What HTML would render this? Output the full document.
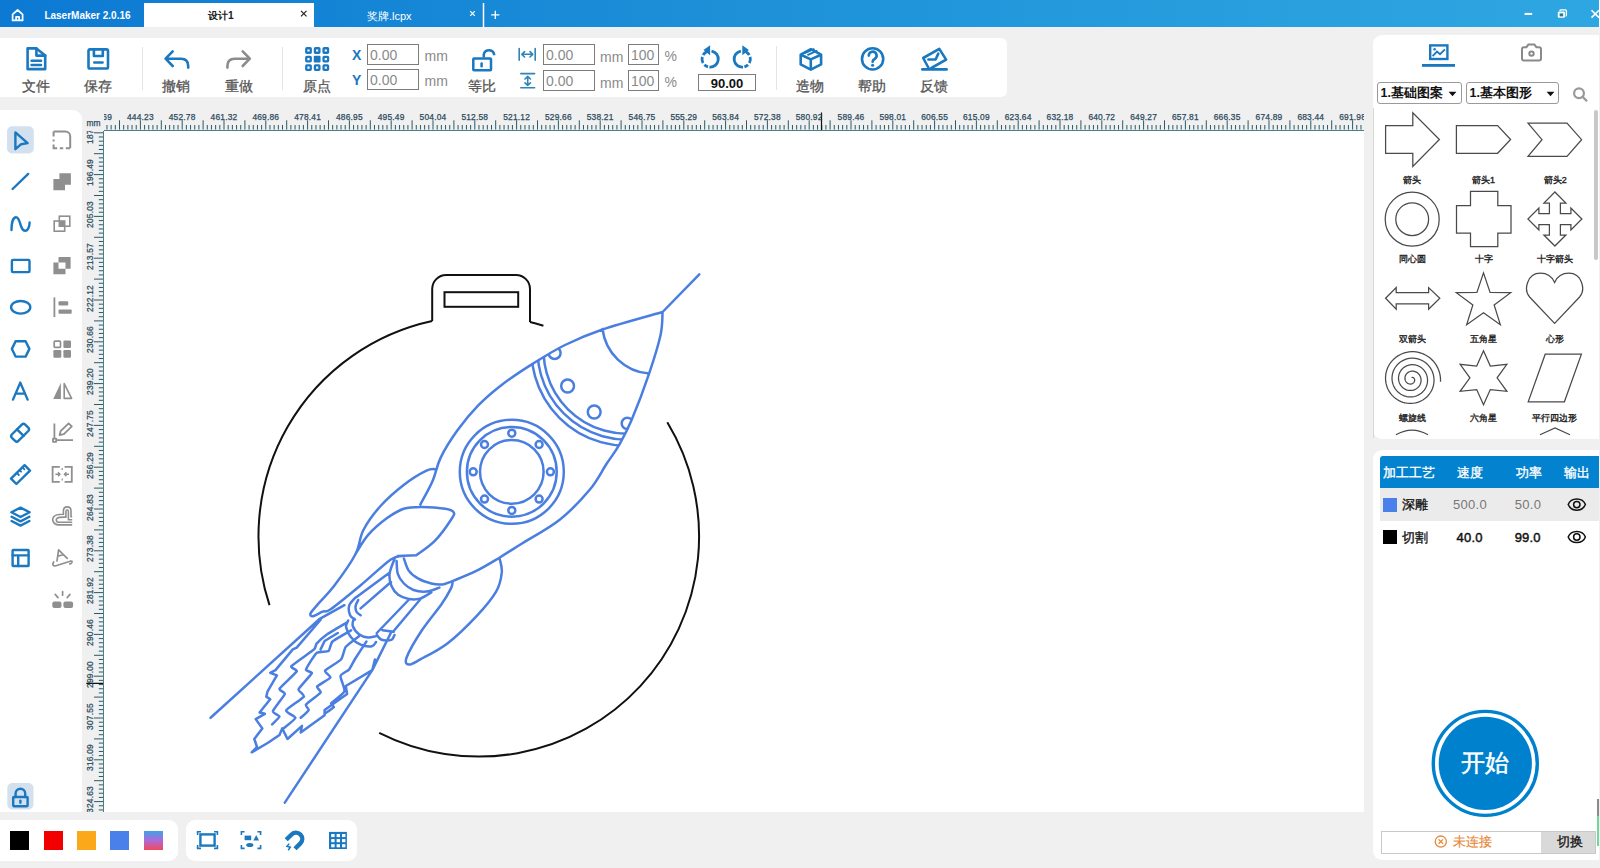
<!DOCTYPE html><html><head><meta charset="utf-8"><style>
*{margin:0;padding:0;box-sizing:border-box}
html,body{width:1600px;height:868px;overflow:hidden;background:#f0f0f0;font-family:"Liberation Sans",sans-serif;position:relative}
.a{position:absolute;white-space:nowrap}
.p{position:absolute;background:#fff}
svg{position:absolute;overflow:visible}
.tl{position:absolute;font-size:14px;color:#555;-webkit-text-stroke:0.3px #555;line-height:14px;white-space:nowrap;text-align:center}
.inp{position:absolute;border:1px solid #7c7c7c;background:#fff;font-size:14px;color:#8a8a8a;line-height:21px;padding-left:2px;white-space:nowrap}
.rl{position:absolute;width:40px;text-align:center;font-size:8.4px;line-height:9px;color:#2c4b5e;letter-spacing:0.2px;-webkit-text-stroke:0.25px #2c4b5e;white-space:nowrap}
.mm{position:absolute;font-size:14px;color:#8a8a8a;line-height:14px}
</style></head><body><div class="a" style="left:0;top:0;width:1599px;height:27px;background:linear-gradient(to right,#0c79d3 0%,#1d90d8 45%,#2ca3e0 89%,#2ea6e1 100%)"></div>
<div class="a" style="left:1599px;top:0;width:1px;height:27px;background:#f4fbff"></div>
<div class="a" style="left:144px;top:3px;width:170px;height:24px;background:#fff"></div>
<div class="p" style="left:0;top:38px;width:1007px;height:59px;border-radius:0 6px 6px 0"></div>
<div class="p" style="left:0;top:110px;width:82px;height:702px;border-radius:0 9px 0 0"></div>
<div class="p" style="left:104px;top:131px;width:1260px;height:681px"></div>
<div class="p" style="left:1373px;top:35px;width:226px;height:404px;border-radius:9px 0 0 9px"></div>
<div class="p" style="left:1373px;top:450px;width:226px;height:410px;border-radius:9px 0 0 9px"></div>
<div class="p" style="left:0;top:820px;width:178px;height:41px;border-radius:0 9px 9px 0"></div>
<div class="p" style="left:186px;top:820px;width:171px;height:41px;border-radius:9px"></div>
<svg class="a" style="left:0;top:0" width="1600" height="30" viewBox="0 0 1600 30">
  <g fill="none" stroke="#fff" stroke-width="1.7" stroke-linejoin="round">
    <path d="M12.6,14.4 L17.6,10 L22.6,14.4 V20.4 H12.6 Z"/>
    <path d="M16.1,20.4 V16.8 H19.1 V20.4"/>
  </g>
  <g fill="none" stroke-linecap="butt">
    <path d="M301,10.8 L306.5,16.3 M306.5,10.8 L301,16.3" stroke="#222" stroke-width="1.2"/>
    <path d="M470.2,11.2 L474.8,15.8 M474.8,11.2 L470.2,15.8" stroke="#fff" stroke-width="1.2"/>
    <path d="M483.5,3 V27" stroke="#fff" stroke-width="1.5"/>
    <path d="M491.2,14.8 H499.4 M495.3,10.7 V18.9" stroke="#fff" stroke-width="1.3"/>
    <path d="M1524.6,13.9 H1532.2" stroke="#fff" stroke-width="2"/>
    <path d="M1591.5,10.2 L1599,17.6 M1599,10.2 L1591.5,17.6" stroke="#fff" stroke-width="1.6"/>
  </g>
  <rect x="1557.8" y="11.4" width="7.2" height="6.4" rx="1.4" fill="#fff"/>
  <path d="M1560,11 V10.6 Q1560,9.8 1561,9.8 H1565.4 Q1566.4,9.8 1566.4,10.8 V15 Q1566.4,16 1565.6,16" fill="none" stroke="#fff" stroke-width="1.3"/>
  <rect x="1559.6" y="13.4" width="3.6" height="3" fill="#227f8f"/>
</svg>
<div class="a" style="left:44.4px;top:10.2px;font-size:10px;line-height:12px;font-weight:bold;color:#fff">LaserMaker 2.0.16</div>
<div class="a" style="left:208px;top:10px;font-size:10.2px;line-height:12px;font-weight:bold;color:#222">设计1</div>
<div class="a" style="left:367px;top:10px;font-size:11px;line-height:12px;color:#fff">奖牌.lcpx</div>
<svg class="a" style="left:0;top:0" width="1600" height="100" viewBox="0 0 1600 100"><g fill="none" stroke="#1a78c0" stroke-width="2.6" stroke-linejoin="round" stroke-linecap="round"><path d="M27.6,48.4 H36.4 L45.2,55.6 V69.1 H27.6 Z"/><path d="M36.4,48.4 V55.6 H45.2"/><path d="M31.6,60.8 H41 M31.6,65 H41"/><rect x="88.5" y="49.4" width="19.5" height="19.1" rx="1.6"/><path d="M93.9,49.6 V56 H102.8 V49.6"/><path d="M94.3,62.5 H102.5"/><path d="M172.7,51.4 L165.6,58.7 L172.7,66 M165.6,58.7 H181 Q188.2,58.7 188.2,66 V67.6"/></g><g fill="none" stroke="#8c8c8c" stroke-width="2.6" stroke-linejoin="round" stroke-linecap="round"><path d="M242.7,51.4 L249.8,58.7 L242.7,66 M249.8,58.7 H234.6 Q227.4,58.7 227.4,66 V67.6"/></g><rect x="306.25" y="48.25" width="4.5" height="4.5" rx="0.6" fill="none" stroke="#1a78c0" stroke-width="2.3"/><rect x="314.90" y="48.25" width="4.5" height="4.5" rx="0.6" fill="none" stroke="#1a78c0" stroke-width="2.3"/><rect x="323.55" y="48.25" width="4.5" height="4.5" rx="0.6" fill="none" stroke="#1a78c0" stroke-width="2.3"/><rect x="306.25" y="56.80" width="4.5" height="4.5" rx="0.6" fill="none" stroke="#1a78c0" stroke-width="2.3"/><rect x="313.75" y="55.65" width="6.8" height="6.8" rx="1" fill="#1a78c0"/><rect x="323.55" y="56.80" width="4.5" height="4.5" rx="0.6" fill="none" stroke="#1a78c0" stroke-width="2.3"/><rect x="306.25" y="65.35" width="4.5" height="4.5" rx="0.6" fill="none" stroke="#1a78c0" stroke-width="2.3"/><rect x="314.90" y="65.35" width="4.5" height="4.5" rx="0.6" fill="none" stroke="#1a78c0" stroke-width="2.3"/><rect x="323.55" y="65.35" width="4.5" height="4.5" rx="0.6" fill="none" stroke="#1a78c0" stroke-width="2.3"/><g fill="none" stroke="#1a78c0" stroke-width="2.5" stroke-linecap="round"><rect x="473.3" y="58.5" width="17.7" height="11.8" rx="0.8"/><path d="M483.8,57.6 V54.2 A5.3,5.3 0 0 1 494.1,54.2 V55.2" stroke-linecap="butt"/><path d="M481.6,63.4 V66.3"/></g><g fill="none" stroke="#2f84b8" stroke-width="1.6" stroke-linecap="round" stroke-linejoin="round"><path d="M519.2,48.6 V60.2 M535.2,48.6 V60.2 M521.8,54.3 H532.8 M524.6,51.6 L521.8,54.3 L524.6,57 M530,51.6 L532.8,54.3 L530,57"/><path d="M520.8,73.6 H534.6 M520.8,87.7 H534.6 M527.7,76.4 V85.4 M525,79 L527.7,76.4 L530.4,79 M525,82.8 L527.7,85.4 L530.4,82.8"/></g><path d="M711.51,51.02 A8.1,8.1 0 0 1 709.39,67.07" fill="none" stroke="#1a78c0" stroke-width="2.8"/><path d="M708.00,66.82 A8.1,8.1 0 0 1 704.37,64.73" fill="none" stroke="#1a78c0" stroke-width="2.8"/><path d="M703.09,63.05 A8.1,8.1 0 0 1 702.28,56.90" fill="none" stroke="#1a78c0" stroke-width="2.8"/><path d="M703.09,54.95 A8.1,8.1 0 0 1 706.68,51.66" fill="none" stroke="#1a78c0" stroke-width="2.8"/><path d="M703.50,50.10 L710.10,45.20 L710.10,55.30 Z" fill="#1a78c0"/><path d="M740.89,51.02 A8.1,8.1 0 0 0 743.01,67.07" fill="none" stroke="#1a78c0" stroke-width="2.8"/><path d="M744.40,66.82 A8.1,8.1 0 0 0 748.03,64.73" fill="none" stroke="#1a78c0" stroke-width="2.8"/><path d="M749.31,63.05 A8.1,8.1 0 0 0 750.12,56.90" fill="none" stroke="#1a78c0" stroke-width="2.8"/><path d="M749.31,54.95 A8.1,8.1 0 0 0 745.72,51.66" fill="none" stroke="#1a78c0" stroke-width="2.8"/><path d="M748.90,50.10 L742.30,45.20 L742.30,55.30 Z" fill="#1a78c0"/><g fill="none" stroke="#1a78c0" stroke-width="2.6" stroke-linejoin="round"><path d="M810.8,49.2 L821.1,54.6 V64.4 L810.8,69.6 L800.7,64.4 V54.6 Z"/><path d="M800.9,54.8 L810.8,59.4 L821,54.8 M810.8,59.4 V69.4"/><path d="M804.6,53.2 L814.5,48.8 M807.4,55.1 L817.4,50.6" stroke-width="2"/></g><g fill="none" stroke="#1a78c0" stroke-width="2.6" stroke-linecap="round"><circle cx="872.6" cy="58.9" r="10.6"/><path d="M868.8,55.6 A3.9,3.9 0 1 1 874.6,59 Q872.6,60 872.6,61.8"/></g><circle cx="872.6" cy="65.3" r="1.5" fill="#1a78c0"/><g fill="none" stroke="#1a78c0" stroke-width="2.6" stroke-linejoin="round" stroke-linecap="round"><path d="M928.6,68 L923.2,58 L939.3,48.9 L946.1,59.6 L931.4,68"/><path d="M928.4,59.5 H935.6 L938.3,53.6"/><path d="M922.3,69.4 H946.6"/></g></svg>
<div class="a" style="left:141.5px;top:47px;width:1px;height:43px;background:#e4e4e4"></div>
<div class="a" style="left:282px;top:47px;width:1px;height:43px;background:#e4e4e4"></div>
<div class="a" style="left:775.5px;top:46px;width:1px;height:44px;background:#e4e4e4"></div>
<div class="tl" style="left:16px;top:79px;width:40px">文件</div>
<div class="tl" style="left:78px;top:79px;width:40px">保存</div>
<div class="tl" style="left:156px;top:79px;width:40px">撤销</div>
<div class="tl" style="left:218.5px;top:79px;width:40px">重做</div>
<div class="tl" style="left:297px;top:79px;width:40px">原点</div>
<div class="tl" style="left:461.5px;top:79px;width:40px">等比</div>
<div class="tl" style="left:790px;top:79px;width:40px">造物</div>
<div class="tl" style="left:852px;top:79px;width:40px">帮助</div>
<div class="tl" style="left:914px;top:79px;width:40px">反馈</div>
<div class="a" style="left:352px;top:48px;font-size:14px;font-weight:bold;color:#1a78c0;line-height:14px">X</div>
<div class="a" style="left:352px;top:73px;font-size:14px;font-weight:bold;color:#1a78c0;line-height:14px">Y</div>
<div class="inp" style="left:367px;top:44px;width:52px;height:21px">0.00</div>
<div class="inp" style="left:367px;top:69px;width:52px;height:21px">0.00</div>
<div class="inp" style="left:543px;top:44px;width:52px;height:21px">0.00</div>
<div class="inp" style="left:543px;top:70px;width:52px;height:21px">0.00</div>
<div class="inp" style="left:628px;top:44px;width:31px;height:21px">100</div>
<div class="inp" style="left:628px;top:70px;width:31px;height:21px">100</div>
<div class="mm" style="left:424.5px;top:49px">mm</div>
<div class="mm" style="left:424.5px;top:74px">mm</div>
<div class="mm" style="left:600px;top:49.5px">mm</div>
<div class="mm" style="left:600px;top:75.5px">mm</div>
<div class="mm" style="left:664.5px;top:49px">%</div>
<div class="mm" style="left:664.5px;top:75px">%</div>
<div class="inp" style="left:698px;top:73.5px;width:58px;height:17.5px;color:#111;text-align:center;line-height:17px;padding:0;font-size:13px;font-weight:bold">90.00</div>
<svg class="a" style="left:0;top:0" width="100" height="868" viewBox="0 0 100 868"><rect x="7" y="126.3" width="26.8" height="27.2" rx="5" fill="#d3e1ef"/><rect x="7.3" y="783" width="26.2" height="26.4" rx="5" fill="#d3e1ef"/><g fill="none" stroke="#1a78c0" stroke-width="2.4" stroke-linejoin="round" stroke-linecap="round"><path d="M15.4,132.4 L27.6,143.1 L21.2,144.2 L15.4,149.2 Z"/><path d="M12.6,189 L28.2,173.9"/><path d="M11.5,230 C11.5,222 13.5,217.2 16,217.2 C19,217.2 20,223.5 21,226 C22,229 23.2,230.8 25.3,230.8 C28,230.8 29.6,226 29.6,222.5"/><rect x="11.9" y="259.9" width="17.6" height="12.2" rx="1"/><ellipse cx="20.7" cy="307.3" rx="9.6" ry="6.3"/><path d="M15.6,341.3 H25.6 L29.4,348.9 L25.6,356.6 H15.6 L11.9,348.9 Z"/><path d="M13,399.6 L20.3,382.6 L27.6,399.6 M15.6,393.6 H25"/><path d="M11.8,434.5 L21.8,424.6 Q23.5,423 25.2,424.6 L28.3,427.7 Q29.9,429.3 28.3,431 L18.4,440.9 Q16.8,442.5 15.1,440.9 L11.9,437.8 Q10.3,436.1 11.8,434.5 Z"/><path d="M17,429.3 L23.6,435.8"/><path d="M11,478.6 L24.6,465.2 L30,470.6 L16.4,484 Z"/><path d="M16.8,473 L18.8,475 M19.6,470.2 L21.1,471.7 M22.4,467.4 L24.4,469.4" stroke-width="1.8"/><path d="M20.5,507.6 L29.6,512.3 L20.5,517 L11.4,512.3 Z"/><path d="M11.6,516.8 L20.5,521.4 L29.4,516.8 M11.6,521 L20.5,525.6 L29.4,521" /><rect x="12.6" y="550" width="16" height="16" rx="0.5"/><path d="M12.6,555.4 H28.6 M18.2,555.4 V566"/><rect x="13.2" y="797" width="14.4" height="9.2" rx="0.6"/><path d="M15.6,797 V793.6 A4.8,4.8 0 0 1 25.2,793.6 V797"/><path d="M20.4,800.6 V802.8"/></g><g fill="none" stroke="#8f8f8f" stroke-width="2"><path d="M53.6,131.6 H65.4 A4.8,4.8 0 0 1 70.2,136.4 V148"/><path d="M53.6,131.6 V136.6 M53.6,139.6 V141.6 M53.6,144.4 V148.2 H57.2 M59.8,148.2 H63.2 M65.8,148.2 H70.2"/></g><g fill="#8f8f8f"><path d="M53.4,179.1 H59.4 V173.2 H70.9 V184.7 H65 V190.2 H53.4 Z"/></g><g fill="none" stroke="#8f8f8f" stroke-width="1.6"><rect x="54.2" y="221" width="10.5" height="10.2"/><rect x="59.3" y="216.2" width="10.5" height="10"/></g><rect x="59.3" y="221" width="5.4" height="5.2" fill="#8f8f8f"/><path d="M53.4,262.5 H58.5 V257 H70.6 V268.7 H65.5 V274.3 H53.4 Z M58.5,262.5 V268.7 H65.5 V262.5 Z" fill="#8f8f8f" fill-rule="evenodd"/><path d="M54.4,297.4 V317" stroke="#8f8f8f" stroke-width="1.8" fill="none"/><rect x="58.5" y="301.3" width="9.7" height="4.1" rx="1" fill="#8f8f8f"/><rect x="58.5" y="309.6" width="13.2" height="4.1" rx="1" fill="#8f8f8f"/><rect x="54.2" y="341.2" width="6.3" height="6.1" rx="0.8" fill="none" stroke="#8f8f8f" stroke-width="1.7"/><rect x="63.4" y="340.4" width="7.6" height="7.6" rx="1.2" fill="#8f8f8f"/><rect x="53.4" y="350.1" width="7.9" height="7.6" rx="1.2" fill="#8f8f8f"/><rect x="63.4" y="350.1" width="7.6" height="7.6" rx="1.2" fill="#8f8f8f"/><path d="M53.2,399 L60.9,382.8 V399 Z" fill="#8f8f8f"/><path d="M64.2,383.6 L71.6,398.4 H64.2 Z" fill="none" stroke="#8f8f8f" stroke-width="1.6" stroke-linejoin="round"/><g fill="none" stroke="#8f8f8f" stroke-width="1.8" stroke-linejoin="round"><path d="M54.4,423.6 V438.4 M56.4,440.2 H73"/><rect x="53" y="438.6" width="3.2" height="3.2"/><path d="M59.6,435 L60.6,431.2 L68.6,423.4 L71.8,426.4 L63.8,434.2 Z"/></g><g fill="none" stroke="#8f8f8f" stroke-width="1.8"><path d="M59.8,466.8 H52.6 V481.8 H59.8 M64.6,466.8 H71.8 V481.8 H64.6"/><path d="M55.4,474.3 H60 M58,472.3 L60,474.3 L58,476.3 M69,474.3 H64.4 M66.4,472.3 L64.4,474.3 L66.4,476.3" stroke-width="1.4"/><path d="M62.2,468 V470 M62.2,478.4 V480.6" stroke-width="1.2"/></g><g fill="none" stroke="#8f8f8f" stroke-width="1.6"><path d="M72.2,524.9 H58.2 C53.6,524.9 51.4,519.8 53.6,516.9 C55.2,514.8 58.4,514.2 63.4,514.3 V511 C63.4,508.6 65,506.9 67.2,506.9 C69.4,506.9 71,508.6 71,511 V516.8 H72.2"/><path d="M72.2,522.3 H58.8 C56.4,522.3 55.4,519.7 57,518.3 C58.2,517.3 60.6,517 65.9,517.1 V511.4 C65.9,510.4 66.5,509.7 67.2,509.7 C67.9,509.7 68.4,510.4 68.4,511.4 V519.7 H72.2"/></g><g fill="none" stroke="#8f8f8f" stroke-width="1.7" stroke-linecap="round" stroke-linejoin="round"><path d="M57,561 L58.6,549.9 L67.2,558.4 M57.6,556.2 L63.6,554.6"/><path d="M53.6,562 Q51.6,566 55.2,566 L70.2,561.2 Q72.8,560.6 71.8,562.6 Q71,564 69.8,563.8"/></g><g fill="none" stroke="#8f8f8f" stroke-width="1.7" stroke-linecap="round"><path d="M62.6,591.6 V595.2 M55.2,594.4 L58,597.6 M70,594.4 L67.2,597.6"/></g><rect x="52.3" y="601.6" width="9.2" height="6.4" rx="2" fill="#8f8f8f"/><rect x="63.4" y="601.6" width="9.7" height="6.4" rx="2" fill="#8f8f8f"/></svg>
<div class="a" style="left:104px;top:129.5px;width:1260px;height:1.2px;background:#4b7f88"></div>
<svg class="a" style="left:0;top:0" width="1600" height="868" viewBox="0 0 1600 868"><path d="M106.96,125 V129.6 M111.14,125 V129.6 M115.32,125 V129.6 M119.50,120.3 V129.6 M123.68,125 V129.6 M127.86,125 V129.6 M132.04,125 V129.6 M136.22,125 V129.6 M140.40,120.3 V129.6 M144.58,125 V129.6 M148.76,125 V129.6 M152.94,125 V129.6 M157.12,125 V129.6 M161.30,120.3 V129.6 M165.48,125 V129.6 M169.66,125 V129.6 M173.84,125 V129.6 M178.02,125 V129.6 M182.20,120.3 V129.6 M186.38,125 V129.6 M190.56,125 V129.6 M194.74,125 V129.6 M198.92,125 V129.6 M203.10,120.3 V129.6 M207.28,125 V129.6 M211.46,125 V129.6 M215.64,125 V129.6 M219.82,125 V129.6 M224.00,120.3 V129.6 M228.18,125 V129.6 M232.36,125 V129.6 M236.54,125 V129.6 M240.72,125 V129.6 M244.90,120.3 V129.6 M249.08,125 V129.6 M253.26,125 V129.6 M257.44,125 V129.6 M261.62,125 V129.6 M265.80,120.3 V129.6 M269.98,125 V129.6 M274.16,125 V129.6 M278.34,125 V129.6 M282.52,125 V129.6 M286.70,120.3 V129.6 M290.88,125 V129.6 M295.06,125 V129.6 M299.24,125 V129.6 M303.42,125 V129.6 M307.60,120.3 V129.6 M311.78,125 V129.6 M315.96,125 V129.6 M320.14,125 V129.6 M324.32,125 V129.6 M328.50,120.3 V129.6 M332.68,125 V129.6 M336.86,125 V129.6 M341.04,125 V129.6 M345.22,125 V129.6 M349.40,120.3 V129.6 M353.58,125 V129.6 M357.76,125 V129.6 M361.94,125 V129.6 M366.12,125 V129.6 M370.30,120.3 V129.6 M374.48,125 V129.6 M378.66,125 V129.6 M382.84,125 V129.6 M387.02,125 V129.6 M391.20,120.3 V129.6 M395.38,125 V129.6 M399.56,125 V129.6 M403.74,125 V129.6 M407.92,125 V129.6 M412.10,120.3 V129.6 M416.28,125 V129.6 M420.46,125 V129.6 M424.64,125 V129.6 M428.82,125 V129.6 M433.00,120.3 V129.6 M437.18,125 V129.6 M441.36,125 V129.6 M445.54,125 V129.6 M449.72,125 V129.6 M453.90,120.3 V129.6 M458.08,125 V129.6 M462.26,125 V129.6 M466.44,125 V129.6 M470.62,125 V129.6 M474.80,120.3 V129.6 M478.98,125 V129.6 M483.16,125 V129.6 M487.34,125 V129.6 M491.52,125 V129.6 M495.70,120.3 V129.6 M499.88,125 V129.6 M504.06,125 V129.6 M508.24,125 V129.6 M512.42,125 V129.6 M516.60,120.3 V129.6 M520.78,125 V129.6 M524.96,125 V129.6 M529.14,125 V129.6 M533.32,125 V129.6 M537.50,120.3 V129.6 M541.68,125 V129.6 M545.86,125 V129.6 M550.04,125 V129.6 M554.22,125 V129.6 M558.40,120.3 V129.6 M562.58,125 V129.6 M566.76,125 V129.6 M570.94,125 V129.6 M575.12,125 V129.6 M579.30,120.3 V129.6 M583.48,125 V129.6 M587.66,125 V129.6 M591.84,125 V129.6 M596.02,125 V129.6 M600.20,120.3 V129.6 M604.38,125 V129.6 M608.56,125 V129.6 M612.74,125 V129.6 M616.92,125 V129.6 M621.10,120.3 V129.6 M625.28,125 V129.6 M629.46,125 V129.6 M633.64,125 V129.6 M637.82,125 V129.6 M642.00,120.3 V129.6 M646.18,125 V129.6 M650.36,125 V129.6 M654.54,125 V129.6 M658.72,125 V129.6 M662.90,120.3 V129.6 M667.08,125 V129.6 M671.26,125 V129.6 M675.44,125 V129.6 M679.62,125 V129.6 M683.80,120.3 V129.6 M687.98,125 V129.6 M692.16,125 V129.6 M696.34,125 V129.6 M700.52,125 V129.6 M704.70,120.3 V129.6 M708.88,125 V129.6 M713.06,125 V129.6 M717.24,125 V129.6 M721.42,125 V129.6 M725.60,120.3 V129.6 M729.78,125 V129.6 M733.96,125 V129.6 M738.14,125 V129.6 M742.32,125 V129.6 M746.50,120.3 V129.6 M750.68,125 V129.6 M754.86,125 V129.6 M759.04,125 V129.6 M763.22,125 V129.6 M767.40,120.3 V129.6 M771.58,125 V129.6 M775.76,125 V129.6 M779.94,125 V129.6 M784.12,125 V129.6 M788.30,120.3 V129.6 M792.48,125 V129.6 M796.66,125 V129.6 M800.84,125 V129.6 M805.02,125 V129.6 M809.20,120.3 V129.6 M813.38,125 V129.6 M817.56,125 V129.6 M821.74,125 V129.6 M825.92,125 V129.6 M830.10,120.3 V129.6 M834.28,125 V129.6 M838.46,125 V129.6 M842.64,125 V129.6 M846.82,125 V129.6 M851.00,120.3 V129.6 M855.18,125 V129.6 M859.36,125 V129.6 M863.54,125 V129.6 M867.72,125 V129.6 M871.90,120.3 V129.6 M876.08,125 V129.6 M880.26,125 V129.6 M884.44,125 V129.6 M888.62,125 V129.6 M892.80,120.3 V129.6 M896.98,125 V129.6 M901.16,125 V129.6 M905.34,125 V129.6 M909.52,125 V129.6 M913.70,120.3 V129.6 M917.88,125 V129.6 M922.06,125 V129.6 M926.24,125 V129.6 M930.42,125 V129.6 M934.60,120.3 V129.6 M938.78,125 V129.6 M942.96,125 V129.6 M947.14,125 V129.6 M951.32,125 V129.6 M955.50,120.3 V129.6 M959.68,125 V129.6 M963.86,125 V129.6 M968.04,125 V129.6 M972.22,125 V129.6 M976.40,120.3 V129.6 M980.58,125 V129.6 M984.76,125 V129.6 M988.94,125 V129.6 M993.12,125 V129.6 M997.30,120.3 V129.6 M1001.48,125 V129.6 M1005.66,125 V129.6 M1009.84,125 V129.6 M1014.02,125 V129.6 M1018.20,120.3 V129.6 M1022.38,125 V129.6 M1026.56,125 V129.6 M1030.74,125 V129.6 M1034.92,125 V129.6 M1039.10,120.3 V129.6 M1043.28,125 V129.6 M1047.46,125 V129.6 M1051.64,125 V129.6 M1055.82,125 V129.6 M1060.00,120.3 V129.6 M1064.18,125 V129.6 M1068.36,125 V129.6 M1072.54,125 V129.6 M1076.72,125 V129.6 M1080.90,120.3 V129.6 M1085.08,125 V129.6 M1089.26,125 V129.6 M1093.44,125 V129.6 M1097.62,125 V129.6 M1101.80,120.3 V129.6 M1105.98,125 V129.6 M1110.16,125 V129.6 M1114.34,125 V129.6 M1118.52,125 V129.6 M1122.70,120.3 V129.6 M1126.88,125 V129.6 M1131.06,125 V129.6 M1135.24,125 V129.6 M1139.42,125 V129.6 M1143.60,120.3 V129.6 M1147.78,125 V129.6 M1151.96,125 V129.6 M1156.14,125 V129.6 M1160.32,125 V129.6 M1164.50,120.3 V129.6 M1168.68,125 V129.6 M1172.86,125 V129.6 M1177.04,125 V129.6 M1181.22,125 V129.6 M1185.40,120.3 V129.6 M1189.58,125 V129.6 M1193.76,125 V129.6 M1197.94,125 V129.6 M1202.12,125 V129.6 M1206.30,120.3 V129.6 M1210.48,125 V129.6 M1214.66,125 V129.6 M1218.84,125 V129.6 M1223.02,125 V129.6 M1227.20,120.3 V129.6 M1231.38,125 V129.6 M1235.56,125 V129.6 M1239.74,125 V129.6 M1243.92,125 V129.6 M1248.10,120.3 V129.6 M1252.28,125 V129.6 M1256.46,125 V129.6 M1260.64,125 V129.6 M1264.82,125 V129.6 M1269.00,120.3 V129.6 M1273.18,125 V129.6 M1277.36,125 V129.6 M1281.54,125 V129.6 M1285.72,125 V129.6 M1289.90,120.3 V129.6 M1294.08,125 V129.6 M1298.26,125 V129.6 M1302.44,125 V129.6 M1306.62,125 V129.6 M1310.80,120.3 V129.6 M1314.98,125 V129.6 M1319.16,125 V129.6 M1323.34,125 V129.6 M1327.52,125 V129.6 M1331.70,120.3 V129.6 M1335.88,125 V129.6 M1340.06,125 V129.6 M1344.24,125 V129.6 M1348.42,125 V129.6 M1352.60,120.3 V129.6 M1356.78,125 V129.6 M1360.96,125 V129.6 M94,132.80 H103 M98.8,136.98 H103 M98.8,141.16 H103 M98.8,145.34 H103 M98.8,149.52 H103 M94,153.70 H103 M98.8,157.88 H103 M98.8,162.06 H103 M98.8,166.24 H103 M98.8,170.42 H103 M94,174.60 H103 M98.8,178.78 H103 M98.8,182.96 H103 M98.8,187.14 H103 M98.8,191.32 H103 M94,195.50 H103 M98.8,199.68 H103 M98.8,203.86 H103 M98.8,208.04 H103 M98.8,212.22 H103 M94,216.40 H103 M98.8,220.58 H103 M98.8,224.76 H103 M98.8,228.94 H103 M98.8,233.12 H103 M94,237.30 H103 M98.8,241.48 H103 M98.8,245.66 H103 M98.8,249.84 H103 M98.8,254.02 H103 M94,258.20 H103 M98.8,262.38 H103 M98.8,266.56 H103 M98.8,270.74 H103 M98.8,274.92 H103 M94,279.10 H103 M98.8,283.28 H103 M98.8,287.46 H103 M98.8,291.64 H103 M98.8,295.82 H103 M94,300.00 H103 M98.8,304.18 H103 M98.8,308.36 H103 M98.8,312.54 H103 M98.8,316.72 H103 M94,320.90 H103 M98.8,325.08 H103 M98.8,329.26 H103 M98.8,333.44 H103 M98.8,337.62 H103 M94,341.80 H103 M98.8,345.98 H103 M98.8,350.16 H103 M98.8,354.34 H103 M98.8,358.52 H103 M94,362.70 H103 M98.8,366.88 H103 M98.8,371.06 H103 M98.8,375.24 H103 M98.8,379.42 H103 M94,383.60 H103 M98.8,387.78 H103 M98.8,391.96 H103 M98.8,396.14 H103 M98.8,400.32 H103 M94,404.50 H103 M98.8,408.68 H103 M98.8,412.86 H103 M98.8,417.04 H103 M98.8,421.22 H103 M94,425.40 H103 M98.8,429.58 H103 M98.8,433.76 H103 M98.8,437.94 H103 M98.8,442.12 H103 M94,446.30 H103 M98.8,450.48 H103 M98.8,454.66 H103 M98.8,458.84 H103 M98.8,463.02 H103 M94,467.20 H103 M98.8,471.38 H103 M98.8,475.56 H103 M98.8,479.74 H103 M98.8,483.92 H103 M94,488.10 H103 M98.8,492.28 H103 M98.8,496.46 H103 M98.8,500.64 H103 M98.8,504.82 H103 M94,509.00 H103 M98.8,513.18 H103 M98.8,517.36 H103 M98.8,521.54 H103 M98.8,525.72 H103 M94,529.90 H103 M98.8,534.08 H103 M98.8,538.26 H103 M98.8,542.44 H103 M98.8,546.62 H103 M94,550.80 H103 M98.8,554.98 H103 M98.8,559.16 H103 M98.8,563.34 H103 M98.8,567.52 H103 M94,571.70 H103 M98.8,575.88 H103 M98.8,580.06 H103 M98.8,584.24 H103 M98.8,588.42 H103 M94,592.60 H103 M98.8,596.78 H103 M98.8,600.96 H103 M98.8,605.14 H103 M98.8,609.32 H103 M94,613.50 H103 M98.8,617.68 H103 M98.8,621.86 H103 M98.8,626.04 H103 M98.8,630.22 H103 M94,634.40 H103 M98.8,638.58 H103 M98.8,642.76 H103 M98.8,646.94 H103 M98.8,651.12 H103 M94,655.30 H103 M98.8,659.48 H103 M98.8,663.66 H103 M98.8,667.84 H103 M98.8,672.02 H103 M94,676.20 H103 M98.8,680.38 H103 M98.8,684.56 H103 M98.8,688.74 H103 M98.8,692.92 H103 M94,697.10 H103 M98.8,701.28 H103 M98.8,705.46 H103 M98.8,709.64 H103 M98.8,713.82 H103 M94,718.00 H103 M98.8,722.18 H103 M98.8,726.36 H103 M98.8,730.54 H103 M98.8,734.72 H103 M94,738.90 H103 M98.8,743.08 H103 M98.8,747.26 H103 M98.8,751.44 H103 M98.8,755.62 H103 M94,759.80 H103 M98.8,763.98 H103 M98.8,768.16 H103 M98.8,772.34 H103 M98.8,776.52 H103 M94,780.70 H103 M98.8,784.88 H103 M98.8,789.06 H103 M98.8,793.24 H103 M98.8,797.42 H103 M94,801.60 H103 M98.8,805.78 H103 M98.8,809.96 H103" stroke="#2b5a66" stroke-width="1" fill="none"/><path d="M821.5,112.5 V130 M86.3,683.3 H103" stroke="#111" stroke-width="1.2"/></svg>
<div class="a" style="left:83.5px;top:131px;width:19.5px;height:681px;background:#ececec;z-index:-1"></div>
<div class="a" style="left:102.6px;top:131px;width:1.3px;height:681px;background:#4b7f88"></div>
<div class="a" style="left:104px;top:105px;width:1260px;height:20px;overflow:hidden"><div class="a" style="left:-104px;top:-105px;width:1400px;height:130px"><div class="rl" style="left:78.60px;top:112.5px">435.69</div><div class="rl" style="left:120.40px;top:112.5px">444.23</div><div class="rl" style="left:162.20px;top:112.5px">452.78</div><div class="rl" style="left:204.00px;top:112.5px">461.32</div><div class="rl" style="left:245.80px;top:112.5px">469.86</div><div class="rl" style="left:287.60px;top:112.5px">478.41</div><div class="rl" style="left:329.40px;top:112.5px">486.95</div><div class="rl" style="left:371.20px;top:112.5px">495.49</div><div class="rl" style="left:413.00px;top:112.5px">504.04</div><div class="rl" style="left:454.80px;top:112.5px">512.58</div><div class="rl" style="left:496.60px;top:112.5px">521.12</div><div class="rl" style="left:538.40px;top:112.5px">529.66</div><div class="rl" style="left:580.20px;top:112.5px">538.21</div><div class="rl" style="left:622.00px;top:112.5px">546.75</div><div class="rl" style="left:663.80px;top:112.5px">555.29</div><div class="rl" style="left:705.60px;top:112.5px">563.84</div><div class="rl" style="left:747.40px;top:112.5px">572.38</div><div class="rl" style="left:789.20px;top:112.5px">580.92</div><div class="rl" style="left:831.00px;top:112.5px">589.46</div><div class="rl" style="left:872.80px;top:112.5px">598.01</div><div class="rl" style="left:914.60px;top:112.5px">606.55</div><div class="rl" style="left:956.40px;top:112.5px">615.09</div><div class="rl" style="left:998.20px;top:112.5px">623.64</div><div class="rl" style="left:1040.00px;top:112.5px">632.18</div><div class="rl" style="left:1081.80px;top:112.5px">640.72</div><div class="rl" style="left:1123.60px;top:112.5px">649.27</div><div class="rl" style="left:1165.40px;top:112.5px">657.81</div><div class="rl" style="left:1207.20px;top:112.5px">666.35</div><div class="rl" style="left:1249.00px;top:112.5px">674.89</div><div class="rl" style="left:1290.80px;top:112.5px">683.44</div><div class="rl" style="left:1332.60px;top:112.5px">691.98</div></div></div>
<div class="a" style="left:80px;top:131px;width:20px;height:681px;overflow:hidden"><div class="a" style="left:-80px;top:-131px;width:200px;height:900px"><div class="rl" style="left:70.20px;top:126.30px;transform:rotate(-90deg)">187.95</div><div class="rl" style="left:70.20px;top:168.10px;transform:rotate(-90deg)">196.49</div><div class="rl" style="left:70.20px;top:209.90px;transform:rotate(-90deg)">205.03</div><div class="rl" style="left:70.20px;top:251.70px;transform:rotate(-90deg)">213.57</div><div class="rl" style="left:70.20px;top:293.50px;transform:rotate(-90deg)">222.12</div><div class="rl" style="left:70.20px;top:335.30px;transform:rotate(-90deg)">230.66</div><div class="rl" style="left:70.20px;top:377.10px;transform:rotate(-90deg)">239.20</div><div class="rl" style="left:70.20px;top:418.90px;transform:rotate(-90deg)">247.75</div><div class="rl" style="left:70.20px;top:460.70px;transform:rotate(-90deg)">256.29</div><div class="rl" style="left:70.20px;top:502.50px;transform:rotate(-90deg)">264.83</div><div class="rl" style="left:70.20px;top:544.30px;transform:rotate(-90deg)">273.38</div><div class="rl" style="left:70.20px;top:586.10px;transform:rotate(-90deg)">281.92</div><div class="rl" style="left:70.20px;top:627.90px;transform:rotate(-90deg)">290.46</div><div class="rl" style="left:70.20px;top:669.70px;transform:rotate(-90deg)">299.00</div><div class="rl" style="left:70.20px;top:711.50px;transform:rotate(-90deg)">307.55</div><div class="rl" style="left:70.20px;top:753.30px;transform:rotate(-90deg)">316.09</div><div class="rl" style="left:70.20px;top:795.10px;transform:rotate(-90deg)">324.63</div></div></div>
<div class="rl" style="left:86.5px;top:118.6px;width:auto;text-align:left;letter-spacing:0">mm</div>
<div class="a" style="left:1377px;top:82.3px;width:84.7px;height:22.2px;border:1px solid #9a9a9a;border-radius:3px;"></div>
<div class="a" style="left:1466px;top:82.3px;width:92.7px;height:22.2px;border:1px solid #9a9a9a;border-radius:3px;"></div>
<div class="a" style="left:1380.5px;top:86px;font-size:12.5px;line-height:14px;color:#111;font-weight:bold">1.基础图案</div>
<div class="a" style="left:1469.5px;top:86px;font-size:12.5px;line-height:14px;color:#111;font-weight:bold">1.基本图形</div>
<div class="a" style="left:1373px;top:108px;width:1px;height:330px;background:#d8d8d8"></div>
<div class="a" style="left:1593.5px;top:110px;width:4px;height:150px;background:#c8c8c8;border-radius:2px"></div>
<div class="a" style="left:1372px;top:174.5px;width:80px;text-align:center;font-size:9px;line-height:11px;color:#222;-webkit-text-stroke:0.35px #222">箭头</div>
<div class="a" style="left:1443.5px;top:174.5px;width:80px;text-align:center;font-size:9px;line-height:11px;color:#222;-webkit-text-stroke:0.35px #222">箭头1</div>
<div class="a" style="left:1515.3px;top:174.5px;width:80px;text-align:center;font-size:9px;line-height:11px;color:#222;-webkit-text-stroke:0.35px #222">箭头2</div>
<div class="a" style="left:1372px;top:254.3px;width:80px;text-align:center;font-size:9px;line-height:11px;color:#222;-webkit-text-stroke:0.35px #222">同心圆</div>
<div class="a" style="left:1443.5px;top:254.3px;width:80px;text-align:center;font-size:9px;line-height:11px;color:#222;-webkit-text-stroke:0.35px #222">十字</div>
<div class="a" style="left:1515px;top:254.3px;width:80px;text-align:center;font-size:9px;line-height:11px;color:#222;-webkit-text-stroke:0.35px #222">十字箭头</div>
<div class="a" style="left:1372.7px;top:333.7px;width:80px;text-align:center;font-size:9px;line-height:11px;color:#222;-webkit-text-stroke:0.35px #222">双箭头</div>
<div class="a" style="left:1443.3px;top:333.7px;width:80px;text-align:center;font-size:9px;line-height:11px;color:#222;-webkit-text-stroke:0.35px #222">五角星</div>
<div class="a" style="left:1514.5px;top:333.7px;width:80px;text-align:center;font-size:9px;line-height:11px;color:#222;-webkit-text-stroke:0.35px #222">心形</div>
<div class="a" style="left:1372.7px;top:412.9px;width:80px;text-align:center;font-size:9px;line-height:11px;color:#222;-webkit-text-stroke:0.35px #222">螺旋线</div>
<div class="a" style="left:1443.3px;top:412.9px;width:80px;text-align:center;font-size:9px;line-height:11px;color:#222;-webkit-text-stroke:0.35px #222">六角星</div>
<div class="a" style="left:1514.5px;top:412.9px;width:80px;text-align:center;font-size:9px;line-height:11px;color:#222;-webkit-text-stroke:0.35px #222">平行四边形</div>
<div class="a" style="left:1380px;top:455.7px;width:219px;height:32.5px;background:#0282cf;border-radius:3px 0 0 0"></div>
<div class="a" style="left:1380px;top:488.3px;width:219px;height:32.3px;background:#ebebeb"></div>
<div class="a" style="left:1383px;top:465.5px;font-size:12.5px;line-height:14px;color:#fff;-webkit-text-stroke:0.35px #fff">加工工艺</div>
<div class="a" style="left:1457px;top:465.5px;font-size:12.5px;line-height:14px;color:#fff;-webkit-text-stroke:0.35px #fff">速度</div>
<div class="a" style="left:1515.5px;top:465.5px;font-size:12.5px;line-height:14px;color:#fff;-webkit-text-stroke:0.35px #fff">功率</div>
<div class="a" style="left:1564px;top:465.5px;font-size:12.5px;line-height:14px;color:#fff;-webkit-text-stroke:0.35px #fff">输出</div>
<div class="a" style="left:1382.7px;top:498px;width:14px;height:13.6px;background:#4a80ea"></div>
<div class="a" style="left:1382.7px;top:530.3px;width:14px;height:13.6px;background:#000"></div>
<div class="a" style="left:1402px;top:498px;font-size:12.5px;line-height:14px;color:#111;-webkit-text-stroke:0.35px #111">深雕</div>
<div class="a" style="left:1402px;top:530.5px;font-size:12.5px;line-height:14px;color:#111;-webkit-text-stroke:0.35px #111">切割</div>
<div class="a" style="left:1453px;top:498px;font-size:13px;line-height:14px;color:#777;letter-spacing:0.3px">500.0</div>
<div class="a" style="left:1514.7px;top:498px;font-size:13px;line-height:14px;color:#777;letter-spacing:0.3px">50.0</div>
<div class="a" style="left:1456.6px;top:530.5px;font-size:13px;line-height:14px;color:#111;-webkit-text-stroke:0.45px #111;letter-spacing:0.2px">40.0</div>
<div class="a" style="left:1514.7px;top:530.5px;font-size:13px;line-height:14px;color:#111;-webkit-text-stroke:0.45px #111;letter-spacing:0.2px">99.0</div>
<div class="a" style="z-index:5;left:1445px;top:750px;width:80px;text-align:center;font-size:23.5px;line-height:26px;color:#fff;-webkit-text-stroke:0.5px #fff">开始</div>
<div class="a" style="left:1381px;top:830.5px;width:214.7px;height:23.5px;border:1px solid #c9c9c9;background:#fff"></div>
<div class="a" style="left:1541px;top:831.5px;width:53.7px;height:21.5px;background:#d9d9d9"></div>
<div class="a" style="left:1453px;top:835px;font-size:12.5px;line-height:14px;color:#e8893a;-webkit-text-stroke:0.2px #e8893a">未连接</div>
<div class="a" style="left:1556.8px;top:835px;font-size:12.5px;line-height:14px;color:#111;-webkit-text-stroke:0.3px #111">切换</div>
<svg class="a" style="left:0;top:0" width="1600" height="868" viewBox="0 0 1600 868"><rect x="1430.2" y="45.4" width="17.2" height="13.6" fill="none" stroke="#1a78c0" stroke-width="2.4"/><path d="M1432.6,56.2 L1437,51.6 L1440,54.2 L1445,49.4" fill="none" stroke="#1a78c0" stroke-width="1.8"/><circle cx="1434.6" cy="49.2" r="1.3" fill="#1a78c0"/><rect x="1422" y="64" width="33" height="2.8" fill="#1a78c0"/><g fill="none" stroke="#8a8a8a" stroke-width="2"><path d="M1522,49.2 Q1522,47.2 1524,47.2 H1526.4 L1528.4,44.6 H1534.4 L1536.4,47.2 H1539 Q1541,47.2 1541,49.2 V58.6 Q1541,60.6 1539,60.6 H1524 Q1522,60.6 1522,58.6 Z"/><circle cx="1531.5" cy="53.6" r="2.2"/></g><g fill="none" stroke="#999" stroke-width="2.2"><circle cx="1579" cy="93.2" r="4.9"/><path d="M1582.6,96.8 L1586.4,100.6" stroke-linecap="round"/></g><path d="M1448.6,91.8 H1456.4 L1452.5,96.2 Z M1546.6,91.8 H1554.4 L1550.5,96.2 Z" fill="#111"/><g fill="none" stroke="#4a4a4a" stroke-width="1.25" stroke-linejoin="miter"><path d="M1385.6,125.6 H1412.8 V112.8 L1439.4,139.5 L1412.8,166.4 V153.3 H1385.6 Z"/><path d="M1456.4,125.6 H1497.6 L1510.6,139.5 L1497.6,153.3 H1456.4 Z"/><path d="M1528,123.2 H1567 L1581.6,139.7 L1567,156.3 H1528 L1542,139.7 Z"/><circle cx="1412.2" cy="219.2" r="27"/><circle cx="1412.2" cy="219.2" r="16.4"/><path d="M1470.5,191.4 H1497.8 V205.6 H1511 V233 H1497.8 V246.6 H1470.5 V233 H1456.5 V205.6 H1470.5 Z"/><path d="M1554.9,192.0 L1543.9,203.0 L1549.4,203.0 L1549.4,213.5 L1538.9,213.5 L1538.9,208.0 L1527.9,219.0 L1538.9,230.0 L1538.9,224.5 L1549.4,224.5 L1549.4,235.0 L1543.9,235.0 L1554.9,246.0 L1565.9,235.0 L1560.4,235.0 L1560.4,224.5 L1570.9,224.5 L1570.9,230.0 L1581.9,219.0 L1570.9,208.0 L1570.9,213.5 L1560.4,213.5 L1560.4,203.0 L1565.9,203.0 Z"/><path d="M1385.6,298.3 L1396.2,287.6 V292.6 H1428.6 V287.6 L1439.8,298.3 L1428.6,309.2 V303.8 H1396.2 V309.2 Z"/><path d="M1483.50,272.90 L1490.08,292.44 L1510.70,292.66 L1494.15,304.96 L1500.31,324.64 L1483.50,312.70 L1466.69,324.64 L1472.85,304.96 L1456.30,292.66 L1476.92,292.44 Z"/><path d="M1554.6,323.4 L1529.6,297 C1523.4,290 1527,273.2 1540.4,273.2 C1547.6,273.2 1552.4,277.6 1554.6,282.4 C1556.8,277.6 1561.6,273.2 1568.8,273.2 C1582.2,273.2 1585.8,290 1579.6,297 Z"/><path d="M1411.54,377.63 L1411.69,377.56 L1411.85,377.50 L1412.03,377.47 L1412.22,377.45 L1412.41,377.45 L1412.61,377.47 L1412.82,377.51 L1413.02,377.58 L1413.23,377.67 L1413.43,377.78 L1413.62,377.92 L1413.81,378.08 L1413.98,378.26 L1414.14,378.47 L1414.28,378.69 L1414.41,378.94 L1414.51,379.20 L1414.59,379.48 L1414.64,379.77 L1414.67,380.07 L1414.66,380.39 L1414.63,380.70 L1414.56,381.03 L1414.46,381.35 L1414.34,381.66 L1414.17,381.97 L1413.98,382.27 L1413.75,382.56 L1413.50,382.83 L1413.21,383.08 L1412.90,383.31 L1412.56,383.51 L1412.19,383.68 L1411.80,383.83 L1411.40,383.93 L1410.98,384.01 L1410.55,384.04 L1410.10,384.03 L1409.66,383.99 L1409.21,383.90 L1408.76,383.77 L1408.32,383.60 L1407.89,383.38 L1407.48,383.12 L1407.08,382.82 L1406.71,382.49 L1406.36,382.11 L1406.05,381.70 L1405.76,381.25 L1405.52,380.78 L1405.31,380.27 L1405.15,379.75 L1405.04,379.20 L1404.97,378.64 L1404.96,378.06 L1405.00,377.48 L1405.08,376.90 L1405.23,376.32 L1405.42,375.75 L1405.67,375.19 L1405.97,374.65 L1406.33,374.13 L1406.73,373.64 L1407.18,373.18 L1407.68,372.75 L1408.22,372.37 L1408.79,372.04 L1409.40,371.75 L1410.04,371.51 L1410.71,371.34 L1411.40,371.22 L1412.10,371.16 L1412.82,371.16 L1413.54,371.23 L1414.25,371.36 L1414.97,371.55 L1415.66,371.82 L1416.34,372.14 L1417.00,372.53 L1417.62,372.98 L1418.21,373.49 L1418.75,374.05 L1419.25,374.67 L1419.70,375.33 L1420.09,376.04 L1420.42,376.78 L1420.69,377.56 L1420.88,378.37 L1421.01,379.20 L1421.06,380.05 L1421.04,380.90 L1420.94,381.76 L1420.77,382.61 L1420.52,383.45 L1420.19,384.28 L1419.79,385.07 L1419.31,385.84 L1418.77,386.57 L1418.16,387.25 L1417.48,387.89 L1416.75,388.46 L1415.96,388.97 L1415.12,389.42 L1414.24,389.79 L1413.32,390.09 L1412.37,390.30 L1411.40,390.43 L1410.41,390.48 L1409.42,390.44 L1408.42,390.31 L1407.43,390.10 L1406.46,389.79 L1405.51,389.40 L1404.59,388.92 L1403.71,388.36 L1402.88,387.72 L1402.10,387.00 L1401.38,386.21 L1400.73,385.36 L1400.15,384.44 L1399.66,383.47 L1399.24,382.46 L1398.91,381.40 L1398.68,380.31 L1398.54,379.20 L1398.50,378.07 L1398.56,376.94 L1398.72,375.80 L1398.98,374.68 L1399.34,373.57 L1399.79,372.50 L1400.35,371.46 L1401.00,370.47 L1401.73,369.53 L1402.55,368.66 L1403.45,367.85 L1404.43,367.12 L1405.47,366.48 L1406.57,365.93 L1407.72,365.47 L1408.92,365.11 L1410.15,364.86 L1411.40,364.72 L1412.67,364.68 L1413.95,364.76 L1415.22,364.95 L1416.48,365.25 L1417.71,365.66 L1418.91,366.19 L1420.07,366.82 L1421.17,367.55 L1422.22,368.38 L1423.19,369.31 L1424.08,370.32 L1424.88,371.42 L1425.59,372.58 L1426.20,373.81 L1426.70,375.10 L1427.09,376.43 L1427.36,377.80 L1427.51,379.20 L1427.54,380.61 L1427.44,382.03 L1427.22,383.44 L1426.88,384.83 L1426.41,386.20 L1425.82,387.53 L1425.11,388.80 L1424.29,390.02 L1423.37,391.17 L1422.34,392.23 L1421.21,393.21 L1420.00,394.09 L1418.70,394.86 L1417.34,395.53 L1415.92,396.07 L1414.45,396.49 L1412.94,396.78 L1411.40,396.93 L1409.85,396.96 L1408.29,396.84 L1406.74,396.59 L1405.21,396.20 L1403.71,395.68 L1402.26,395.03 L1400.87,394.25 L1399.54,393.34 L1398.29,392.31 L1397.12,391.18 L1396.06,389.94 L1395.10,388.61 L1394.26,387.19 L1393.55,385.70 L1392.96,384.14 L1392.51,382.53 L1392.20,380.88 L1392.04,379.20 L1392.02,377.50 L1392.16,375.81 L1392.44,374.12 L1392.87,372.46 L1393.45,370.83 L1394.16,369.25 L1395.02,367.73 L1396.02,366.29 L1397.14,364.94 L1398.38,363.68 L1399.73,362.53 L1401.18,361.50 L1402.72,360.59 L1404.35,359.82 L1406.04,359.19 L1407.79,358.71 L1409.58,358.39 L1411.40,358.22 L1413.24,358.21 L1415.08,358.36 L1416.90,358.67 L1418.70,359.14 L1420.46,359.77 L1422.16,360.56 L1423.80,361.49 L1425.35,362.57 L1426.81,363.79 L1428.17,365.13 L1429.40,366.59 L1430.51,368.17 L1431.48,369.84 L1432.31,371.59 L1432.98,373.42 L1433.49,375.31 L1433.83,377.24 L1434.01,379.20 L1434.01,381.18 L1433.84,383.16 L1433.50,385.12 L1432.99,387.06 L1432.30,388.95 L1431.45,390.78 L1430.44,392.53 L1429.27,394.20 L1427.96,395.76 L1426.51,397.21 L1424.94,398.53 L1423.25,399.72 L1421.45,400.76 L1419.57,401.63 L1417.60,402.35 L1415.58,402.89 L1413.50,403.25 L1411.40,403.43 L1409.28,403.43 L1407.16,403.24 L1405.06,402.87 L1402.99,402.31 L1400.97,401.57 L1399.01,400.66 L1397.14,399.57 L1395.36,398.32 L1393.69,396.91 L1392.14,395.36 L1390.73,393.67 L1389.47,391.86 L1388.37,389.94 L1387.44,387.92 L1386.68,385.82 L1386.11,383.66 L1385.73,381.45 L1385.54,379.20 L1385.55,376.94 L1385.76,374.68 L1386.16,372.44 L1386.76,370.23 L1387.55,368.08 L1388.54,366.00 L1389.70,364.01 L1391.04,362.11 L1392.54,360.34 L1394.20,358.70 L1396.00,357.20 L1397.93,355.87 L1399.98,354.70 L1402.12,353.71 L1404.36,352.91 L1406.66,352.31 L1409.01,351.91 L1411.40,351.72 L1413.80,351.73 L1416.20,351.96 L1418.58,352.39 L1420.92,353.03 L1423.21,353.88 L1425.41,354.93 L1427.53,356.17 L1429.53,357.59 L1431.41,359.19 L1433.15,360.95 L1434.73,362.87 L1436.14,364.92 L1437.37,367.09 L1438.41,369.37 L1439.26,371.74 L1439.89,374.18 L1440.31,376.67 L1440.51,379.20 L1440.49,381.74"/><path d="M1483.50,350.80 L1490.30,366.02 L1506.88,364.30 L1497.10,377.80 L1506.88,391.30 L1490.30,389.58 L1483.50,404.80 L1476.70,389.58 L1460.12,391.30 L1469.90,377.80 L1460.12,364.30 L1476.70,366.02 Z"/><path d="M1545.2,354.2 H1581.4 L1564.4,401.8 H1528.2 Z"/><path d="M1396,434.8 Q1412,425.6 1428,434.8 M1540,434.8 L1555,428 L1570,434.8"/></g><g fill="none" stroke="#111" stroke-width="1.5"><path d="M1568.2,504.6 C1571,497.20000000000005 1582.6,497.20000000000005 1585.4,504.6 C1582.6,512.0 1571,512.0 1568.2,504.6 Z"/><circle cx="1576.8" cy="504.6" r="3.2"/></g><g fill="none" stroke="#111" stroke-width="1.5"><path d="M1568.2,537 C1571,529.6 1582.6,529.6 1585.4,537 C1582.6,544.4 1571,544.4 1568.2,537 Z"/><circle cx="1576.8" cy="537" r="3.2"/></g><circle cx="1485.3" cy="763.4" r="52" fill="none" stroke="#0081ce" stroke-width="3.4"/><circle cx="1485.3" cy="763.4" r="46.6" fill="#0081ce"/><g fill="none" stroke="#e8893a" stroke-width="1.3"><circle cx="1440.8" cy="841.6" r="5.6"/><path d="M1438.6,839.4 L1443,843.8 M1443,839.4 L1438.6,843.8"/></g></svg>
<div class="a" style="left:1597.4px;top:798.6px;width:1.4px;height:17.4px;background:#8a8a8a"></div><div class="a" style="left:1597.4px;top:816px;width:1.4px;height:30px;background:#6fd89a"></div>
<div class="a" style="left:10px;top:831px;width:19px;height:19px;background:#000"></div>
<div class="a" style="left:43.5px;top:831px;width:19px;height:19px;background:#f20000"></div>
<div class="a" style="left:77px;top:831px;width:19px;height:19px;background:#fba81a"></div>
<div class="a" style="left:110.4px;top:831px;width:19px;height:19px;background:#4a80ea"></div>
<div class="a" style="left:144px;top:831px;width:19px;height:19px;background:linear-gradient(to bottom,#3fa4e6 0%,#b068d8 50%,#f04a5a 100%)"></div>
<svg class="a" style="left:0;top:0" width="1600" height="868" viewBox="0 0 1600 868"><g fill="none" stroke="#1a78c0" stroke-width="2.4"><rect x="200.4" y="834.4" width="14.2" height="11.2"/></g><g fill="none" stroke="#1a78c0" stroke-width="1.6"><path d="M197.6,835 V831.8 H201 M214,831.8 H217.4 V835 M217.4,845 V848.4 H214 M201,848.4 H197.6 V845"/></g><g fill="none" stroke="#1a78c0" stroke-width="1.6"><path d="M241.4,835 V831.8 H244.6 M257.4,831.8 H260.6 V835 M260.6,845 V848.4 H257.4 M244.6,848.4 H241.4 V845"/></g><rect x="244.6" y="835.6" width="6.6" height="4.6" fill="#1a78c0"/><path d="M256.2,835 L259,840.4 H253.4 Z" fill="#1a78c0"/><ellipse cx="249.8" cy="845" rx="3.6" ry="2" fill="#1a78c0"/><path d="M286.2,839.8 L291.6,834.5 A6.25,6.25 0 0 1 300.4,843.4 L295,848.8" fill="none" stroke="#1a78c0" stroke-width="4.4"/><path d="M289.2,843.6 L287,846.3 L290.3,847.2 L288.2,850.2" fill="none" stroke="#1a78c0" stroke-width="1.5" stroke-linejoin="miter"/><rect x="329" y="831.9" width="17.9" height="17.1" fill="#1a78c0"/><rect x="331.2" y="834.0" width="3.4" height="3.1" fill="#fff"/><rect x="336.6" y="834.0" width="3.4" height="3.1" fill="#fff"/><rect x="342.0" y="834.0" width="3.4" height="3.1" fill="#fff"/><rect x="331.2" y="839.1" width="3.4" height="3.1" fill="#fff"/><rect x="336.6" y="839.1" width="3.4" height="3.1" fill="#fff"/><rect x="342.0" y="839.1" width="3.4" height="3.1" fill="#fff"/><rect x="331.2" y="844.2" width="3.4" height="3.1" fill="#fff"/><rect x="336.6" y="844.2" width="3.4" height="3.1" fill="#fff"/><rect x="342.0" y="844.2" width="3.4" height="3.1" fill="#fff"/></svg>
<svg class="a" style="left:0;top:0" width="1600" height="868" viewBox="0 0 1600 868"><g fill="none" stroke="#111" stroke-width="2"><path d="M530.0,322.0 A220.3,220.3 0 0 1 543.4,325.7 M667.3,422.3 A220.3,220.3 0 0 1 379.2,732.8 M269.5,605.1 A220.3,220.3 0 0 1 432.2,321.0 M432.2,321 V289 A14,14 0 0 1 446.2,275 H516 A14,14 0 0 1 530,289 V322"/><rect x="444.5" y="292.2" width="73.7" height="14.6"/></g><defs><clipPath id="bodyclip"><path d="M662.6,312.0 C652.6,314.9 618.8,324.0 602.5,329.5 C586.2,335.0 576.6,339.3 565.0,345.0 C553.4,350.7 543.4,357.1 533.0,363.6 C522.6,370.1 512.1,377.0 502.9,384.0 C493.7,391.0 485.6,397.9 478.0,405.7 C470.4,413.5 463.5,422.0 457.3,430.6 C451.1,439.2 444.8,449.2 440.7,457.6 C436.6,466.0 436.1,472.9 432.7,480.7 C429.3,488.5 422.4,500.6 420.3,504.6 L400,556 L441.3,585.2 450.6,581.9 C455.0,580.0 468.7,574.6 476.8,570.6 C484.9,566.6 491.9,562.2 499.4,557.7 C506.9,553.2 511.9,549.8 522.0,543.5 C532.0,537.2 548.4,528.7 559.7,519.7 C571.0,510.8 581.9,499.1 589.7,489.8 C597.5,480.5 601.7,471.2 606.6,463.8 C611.5,456.4 614.9,452.4 619.0,445.1 C623.1,437.9 626.5,432.2 631.5,420.3 C636.5,408.4 644.3,387.8 649.1,373.6 C653.9,359.4 658.2,345.5 660.5,335.2 C662.8,324.9 662.2,315.9 662.6,312.0 Z"/></clipPath></defs><g fill="none" stroke="#4a7ee0" stroke-width="2.5" stroke-linecap="round" stroke-linejoin="round"><path d="M662.6,312.0 C652.6,314.9 618.8,324.0 602.5,329.5 C586.2,335.0 576.6,339.3 565.0,345.0 C553.4,350.7 543.4,357.1 533.0,363.6 C522.6,370.1 512.1,377.0 502.9,384.0 C493.7,391.0 485.6,397.9 478.0,405.7 C470.4,413.5 463.5,422.0 457.3,430.6 C451.1,439.2 444.8,449.2 440.7,457.6 C436.6,466.0 436.1,472.9 432.7,480.7 C429.3,488.5 422.4,500.6 420.3,504.6 M662.6,312.0 C662.2,315.9 662.8,324.9 660.5,335.2 C658.2,345.5 653.9,359.4 649.1,373.6 C644.3,387.8 636.5,408.4 631.5,420.3 C626.5,432.2 623.1,437.9 619.0,445.1 C614.9,452.4 611.5,456.4 606.6,463.8 C601.7,471.2 597.5,480.5 589.7,489.8 C581.9,499.1 571.0,510.8 559.7,519.7 C548.4,528.7 532.0,537.2 522.0,543.5 C511.9,549.8 506.9,553.2 499.4,557.7 C491.9,562.2 484.9,566.6 476.8,570.6 C468.7,574.6 455.0,580.0 450.6,581.9 M662.6,312 L699.3,274.3 M602.5,329 A51,51 0 0 0 649.1,373.6 M563.8,471.8 A52,52 0 1 1 459.8,471.8 A52,52 0 1 1 563.8,471.8 M556.7,471.8 A44.9,44.9 0 1 1 466.90000000000003,471.8 A44.9,44.9 0 1 1 556.7,471.8 M543.6,471.8 A31.8,31.8 0 1 1 480.0,471.8 A31.8,31.8 0 1 1 543.6,471.8 M355.3,554.2 C357.5,551.0 363.1,540.7 368.4,534.7 C373.7,528.7 381.2,522.4 387.1,518.1 C393.0,513.8 397.9,510.6 403.7,508.7 C409.5,506.8 414.8,506.9 421.7,506.9 C428.6,506.9 439.9,507.8 445.2,508.7 C450.5,509.6 452.6,510.5 453.6,512.2 C454.7,513.9 454.6,514.2 451.5,519.0 C448.4,523.8 440.7,534.9 434.8,540.9 C428.9,546.9 419.4,552.9 416.3,555.3 L397.7,556.1 M436.5,469.2 C434.8,469.4 432.0,468.0 426.5,470.6 C421.0,473.2 411.4,479.0 403.7,484.9 C396.0,490.8 387.2,498.5 380.5,506.0 C373.8,513.5 367.6,521.9 363.4,530.0 C359.2,538.1 360.1,545.3 355.3,554.5 C350.5,563.7 340.9,576.9 334.6,585.3 C328.3,593.7 321.3,600.2 317.3,604.9 C313.3,609.6 311.2,611.6 310.5,613.5 C309.8,615.4 311.0,616.5 313.0,616.2 C315.0,615.9 319.6,612.8 322.6,611.6 C325.6,610.4 324.7,613.4 331.0,609.0 C337.3,604.6 350.4,593.8 360.4,585.5 C370.4,577.2 383.8,564.4 390.8,559.5 C397.8,554.6 400.4,556.7 402.3,556.1 M499.4,557.7 C499.8,560.1 502.4,566.6 501.8,572.3 C501.2,577.9 500.3,584.4 496.1,591.6 C491.9,598.9 484.9,607.2 476.8,615.8 C468.7,624.4 457.1,635.9 447.7,643.2 C438.3,650.5 426.8,655.8 420.3,659.4 C413.9,663.0 411.3,664.9 409.0,664.6 C406.7,664.3 404.5,663.2 406.6,657.5 C408.8,651.8 416.1,639.1 421.9,630.3 C427.7,621.5 436.4,611.5 441.3,604.5 C446.2,597.5 449.1,592.2 451.0,588.4 C452.9,584.6 452.3,583.0 452.6,581.9 M395.0,557.7 C394.1,560.3 390.2,568.8 389.6,573.5 C389.0,578.2 390.1,582.5 391.5,586.0 C392.9,589.5 395.3,592.6 398.2,594.8 C401.1,596.9 405.1,598.3 408.7,598.9 C412.3,599.5 416.2,599.7 420.0,598.6 C423.8,597.5 429.4,593.4 431.3,592.4 M396.6,561.0 C396.8,563.1 396.6,570.0 397.8,573.8 C399.0,577.5 401.3,580.8 403.9,583.5 C406.5,586.2 409.7,588.6 413.5,590.0 C417.3,591.4 422.2,592.0 426.5,591.6 C430.8,591.2 437.2,588.3 439.4,587.6 M403.9,558.5 C404.7,560.5 406.3,567.2 408.7,570.6 C411.1,574.0 414.6,576.6 418.4,578.7 C422.2,580.9 427.3,582.5 431.3,583.5 C435.3,584.5 439.4,584.7 442.6,584.4 C445.8,584.1 449.3,582.3 450.6,581.9 M389.8,572.6 L356.6,597.1 M391,582 L360.6,608.4 M409,599.5 L376.8,633 M420.6,599 L393.7,631 M355.6,597.4 C354.5,598.8 350.1,602.6 349.2,605.6 C348.3,608.6 349.2,613.3 350.2,615.6 C351.2,617.9 354.2,618.8 355.0,619.4 M358.2,600.0 C357.8,601.0 355.9,604.0 355.6,606.0 C355.3,608.0 355.8,610.5 356.6,612.0 C357.4,613.5 359.9,614.7 360.6,615.2 M348.2,620.5 C347.9,621.6 345.6,624.2 346.1,627.0 C346.6,629.8 348.6,634.2 351.0,637.2 C353.4,640.2 357.1,643.2 360.6,644.7 C364.1,646.2 369.3,646.8 371.9,646.3 C374.5,645.8 375.3,642.7 376.0,642.0 M353.8,618.6 C353.6,619.8 351.9,623.4 352.8,626.0 C353.7,628.6 356.5,632.3 359.0,634.2 C361.5,636.1 365.1,637.1 367.9,637.4 C370.7,637.7 374.6,636.4 376.0,636.2 M376.8,635.0 C377.6,635.8 379.2,639.0 381.6,639.8 C384.0,640.6 389.2,640.6 391.3,639.8 C393.4,639.0 394.0,635.8 394.5,635.0 M382.4,630.2 L393.7,631.8 M320.6,619.8 L296.7,647.6 L292.8,649.4 L275.5,670.1 L270.2,672.8 L276.9,675.4 L267.6,691.3 L266.3,696.6 L270.2,699.3 L259.6,712.5 L264.9,713.8 L255.7,719.1 L262.3,728.4 L254.3,739.0 L257.0,747.0 L251.7,752.3 L267.6,743.0 L279.5,735.0 L282.2,728.4 L287.5,739.0 L302.0,725.8 L300.7,732.4 L324.6,715.2 L324.6,709.9 L347.1,694.0 L345.8,686.0 L372.3,670.1 L374.9,659.5 M210.6,717.8 L319.3,619.2 L344.4,605.2 M284.8,802.6 L372.3,670.1 L390.8,633.0 M347.1,622.4 C345.4,623.4 329.8,632.6 327.2,634.3 C324.7,636.1 317.7,642.4 316.6,643.6 C315.5,644.9 316.1,647.6 314.0,649.4 C311.9,651.3 292.9,664.3 291.4,666.1 C290.0,668.0 297.7,669.6 296.7,671.4 C295.7,673.3 280.5,686.8 279.5,688.7 C278.5,690.5 285.4,692.1 284.8,694.0 C284.3,695.8 273.3,709.3 272.9,711.2 C272.4,713.1 279.6,715.4 279.5,716.5 C279.4,717.6 272.7,723.8 272.1,724.4 M351.1,630.4 C349.5,631.3 334.4,639.8 332.5,641.5 C330.6,643.2 329.9,650.1 328.5,651.0 C327.2,652.0 318.5,651.3 316.6,652.9 C314.7,654.4 306.4,667.9 306.0,669.6 C305.6,671.3 312.5,671.7 311.8,673.3 C311.2,674.9 299.3,687.3 298.6,689.2 C297.9,691.1 304.9,694.9 303.9,696.6 C302.9,698.4 286.8,708.6 286.1,710.4 C285.4,712.2 295.6,716.3 295.4,717.8 C295.2,719.3 284.5,727.5 283.5,728.4 M359.0,636.2 C357.9,637.1 347.3,644.8 345.8,646.8 C344.3,648.7 342.7,657.5 341.0,659.5 C339.3,661.5 326.0,669.1 325.1,670.6 C324.2,672.1 331.1,676.2 330.4,677.5 C329.7,678.9 318.0,685.3 317.1,686.5 C316.3,687.8 321.5,691.1 320.6,692.6 C319.7,694.1 307.0,703.1 306.0,704.6 C305.0,706.0 309.1,708.8 308.7,709.9 C308.2,711.0 301.4,717.2 300.7,717.8 M366.4,641.5 C365.5,642.9 356.5,656.6 355.0,659.0 C353.6,661.3 350.2,668.2 349.0,669.6 C347.7,671.0 340.8,674.1 340.5,675.9 C340.1,677.8 345.2,689.0 344.4,691.3 C343.7,693.6 332.1,701.9 331.2,703.2 C330.3,704.6 334.4,706.3 333.8,707.2 C333.3,708.1 325.3,713.3 324.6,713.8 M337.8,633.0 L324.6,641.0 L320.6,649.4"/><circle cx="550.4" cy="471.8" r="3.5"/><circle cx="539.1" cy="499.1" r="3.5"/><circle cx="511.8" cy="510.4" r="3.5"/><circle cx="484.5" cy="499.1" r="3.5"/><circle cx="473.2" cy="471.8" r="3.5"/><circle cx="484.5" cy="444.5" r="3.5"/><circle cx="511.8" cy="433.2" r="3.5"/><circle cx="539.1" cy="444.5" r="3.5"/><g clip-path="url(#bodyclip)"><path d="M532.9,333.9 A95.3,95.3 0 0 0 643.3,444.3 M538.9,334.9 A89.3,89.3 0 0 0 642.3,438.3 M544.8,335.9 A83.3,83.3 0 0 0 641.3,432.4 "/><circle cx="554.6" cy="353" r="6"/><circle cx="567.6" cy="386" r="6.4"/><circle cx="594.2" cy="412" r="6.4"/><circle cx="627.3" cy="423.4" r="5.6"/></g></g></svg></body></html>
